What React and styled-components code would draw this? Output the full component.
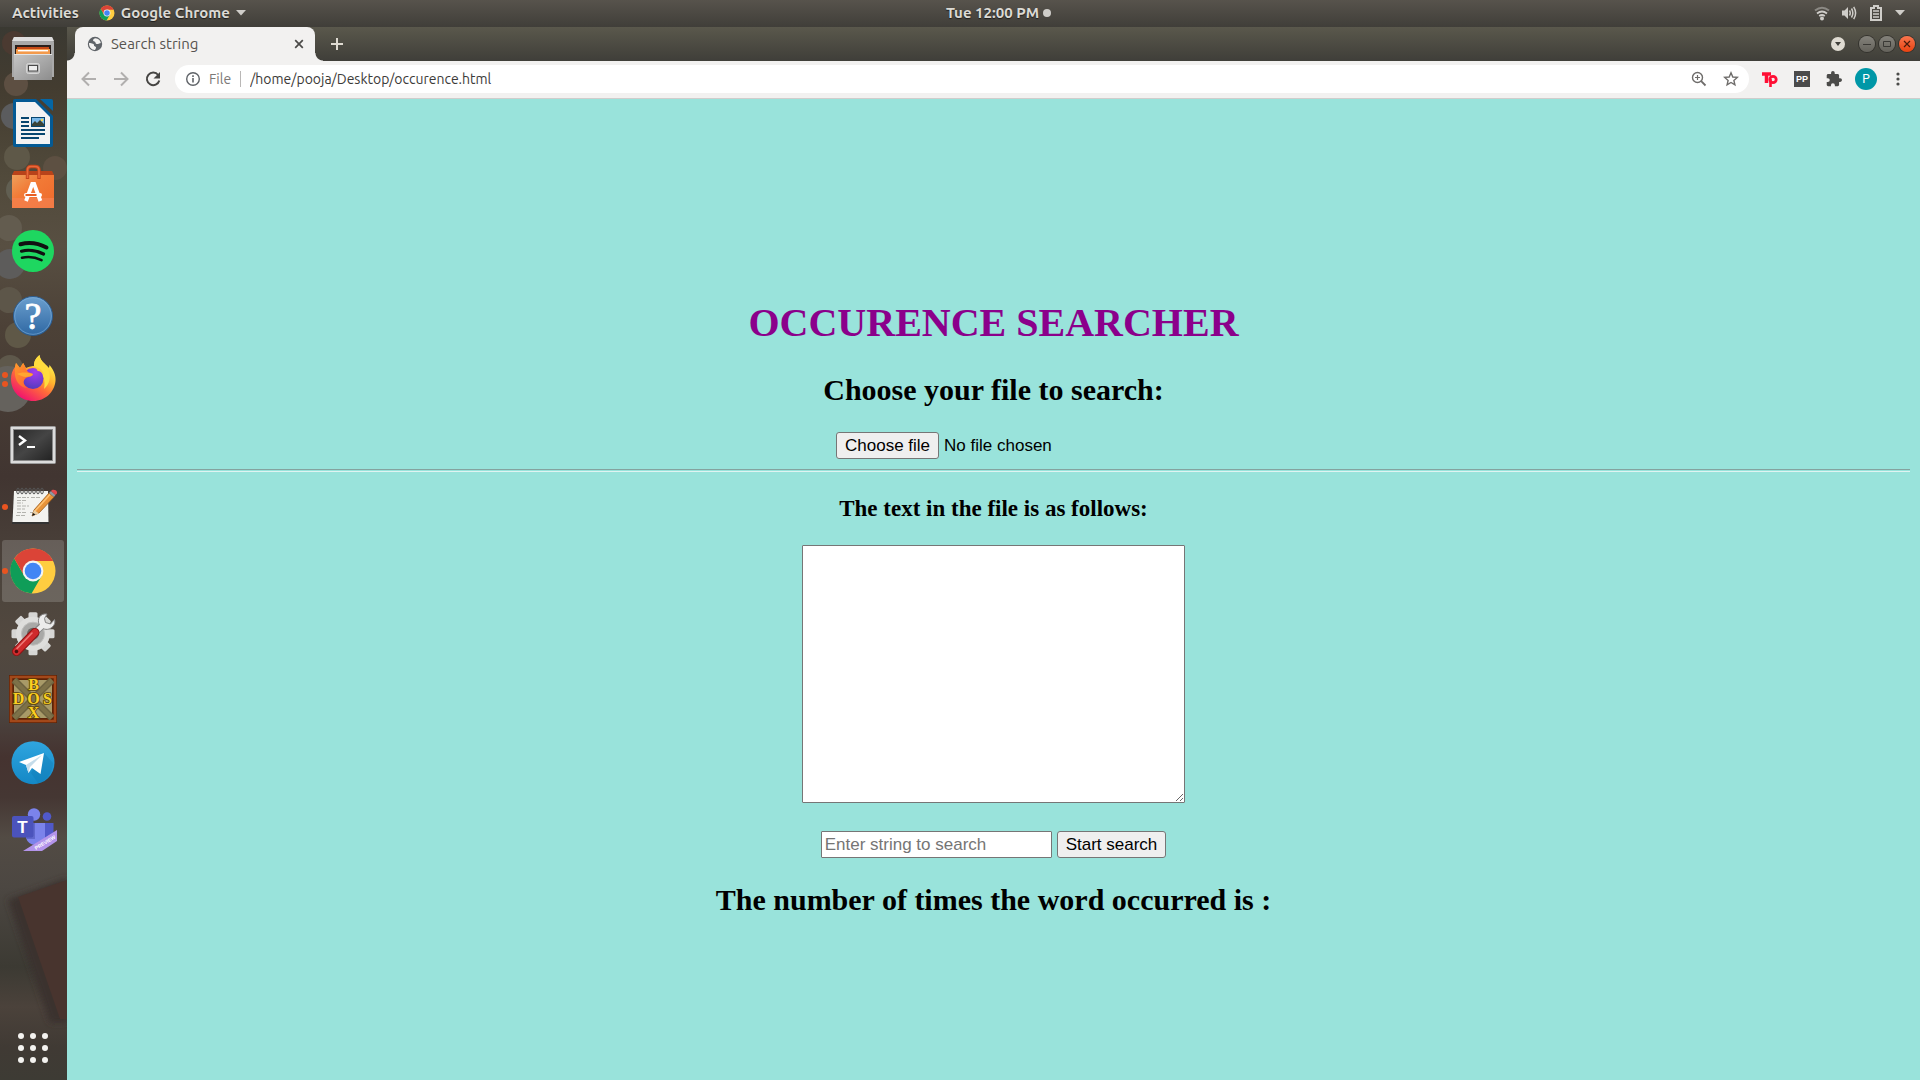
import React, { useRef, useState } from "react";
import styled, { createGlobalStyle } from "styled-components";

const Global = createGlobalStyle`
  * { box-sizing: border-box; }
  body { margin: 0; }
  button, input, textarea { font: inherit; margin: 0; }
`;

const uiFont = `Ubuntu, "Noto Sans", "Open Sans", sans-serif`;
const controlFont = `"Liberation Sans", Arial, sans-serif`;

/* ---------- desktop ---------- */

const Desktop = styled.div`
  display: flex;
  flex-direction: column;
  min-height: 100vh;
  font-family: ${uiFont};
`;

const Panel = styled.header`
  display: grid;
  grid-template-columns: 1fr auto 1fr;
  align-items: center;
  height: 27px;
  padding: 0 15px 1px 12px;
  background: linear-gradient(#57534c, #403e39);
  color: #dcdad5;
  font-size: 15px;
  font-weight: 600;
  line-height: 20px;
  text-shadow: 0 1px 1px rgba(0, 0, 0, 0.6);
`;

const PanelGroup = styled.div`
  display: flex;
  align-items: center;
  gap: ${(p) => p.$gap}px;
  justify-content: ${(p) => (p.$end ? "flex-end" : "flex-start")};
`;

const PanelButton = styled.button`
  display: flex;
  align-items: center;
  gap: 6px;
  padding: 0;
  border: 0;
  background: none;
  color: inherit;
  text-shadow: inherit;
  white-space: nowrap;
`;

const Clock = styled(PanelButton)`
  gap: 4px;
  padding-left: 80px;
`;

const Dot = styled.span`
  width: 8px;
  height: 8px;
  border-radius: 50%;
  background: #cfcdc9;
`;

const Workspace = styled.div`
  display: flex;
  flex: 1;
`;

/* ---------- dock ---------- */

const Dock = styled.nav`
  position: relative;
  isolation: isolate;
  display: flex;
  flex-direction: column;
  gap: 2px;
  width: 67px;
  flex: none;
  padding: 1px 3px 1px 2px;
  background: linear-gradient(#3a3932, #433c30 60px, #514a3b 150px, #584f42 220px, #4c4137 300px, #413531 450px, #4d453d 560px, #52483f 620px, #4c4641 680px, #453330 730px, #453733 770px, #524b44 810px, #4c4742 860px, #3c3a33 940px, #4b423b 980px, #403a34 1020px, #3d3b34);
`;

const Wallpaper = styled.svg`
  position: absolute;
  top: 0;
  left: 0;
  z-index: -1;
`;

const DockButton = styled.button`
  position: relative;
  display: grid;
  place-items: center;
  height: 62px;
  padding: 0;
  border: 0;
  border-radius: 3px;
  background: ${(p) => (p.$active ? "rgba(255, 255, 255, 0.17)" : "none")};
  ${(p) => p.$last && "margin-top: auto;"}
`;

const Running = styled.span`
  position: absolute;
  left: 0;
  top: 0;
  bottom: 0;
  display: flex;
  flex-direction: column;
  justify-content: center;
  gap: 3px;

  i {
    width: 6px;
    height: 6px;
    border-radius: 50%;
    background: #e95420;
  }
`;

/* ---------- browser chrome ---------- */

const Browser = styled.section`
  display: flex;
  flex-direction: column;
  flex: 1;
  min-width: 0;
`;

const TabStrip = styled.div`
  display: flex;
  align-items: center;
  height: 34px;
  padding: 0 5px 0 8px;
  background: linear-gradient(#5a584c, #3f3e39);
`;

const Tab = styled.div`
  position: relative;
  display: flex;
  align-items: center;
  gap: 8px;
  align-self: stretch;
  width: 240px;
  padding: 0 10px 0 12px;
  border-radius: 8px 8px 0 0;
  background: #f2f1f0;
  color: #56534f;
  font-size: 15px;
  line-height: 20px;

  &::before,
  &::after {
    content: "";
    position: absolute;
    bottom: 0;
    width: 8px;
    height: 8px;
  }
  &::before {
    left: -8px;
    background: radial-gradient(circle at 0 0, transparent 7px, #f2f1f0 8px);
  }
  &::after {
    right: -8px;
    background: radial-gradient(circle at 100% 0, transparent 7px, #f2f1f0 8px);
  }
`;

const TabTitle = styled.span`
  flex: 1;
`;

const IconButton = styled.button`
  display: grid;
  place-items: center;
  width: ${(p) => p.$w}px;
  height: ${(p) => p.$h || p.$w}px;
  flex: none;
  padding: 0;
  border: 0;
  background: none;
`;

const NewTab = styled(IconButton)`
  margin-left: 12px;
`;

const WindowButtons = styled.div`
  display: flex;
  align-items: center;
  gap: 4px;
  margin-left: auto;
`;

const TabSearch = styled(IconButton)`
  margin-right: 9px;
`;

const WindowButton = styled.button`
  display: grid;
  place-items: center;
  width: 16px;
  height: 16px;
  padding: 0;
  border: 0;
  border-radius: 50%;
  background: ${(p) => (p.$close ? "linear-gradient(#f9764e, #ea4210)" : "linear-gradient(#84827b, #64625b)")};
  box-shadow: 0 0 0 1px #34332e;
`;

const Toolbar = styled.div`
  display: flex;
  align-items: center;
  height: 38px;
  padding: 3px 6px 4px;
  background: #f2f1f0;
  border-bottom: 1px solid #cfcdcc;
`;

const AddressBar = styled.label`
  display: flex;
  align-items: center;
  flex: 1;
  height: 28px;
  margin: 0 5px 0 6px;
  padding: 0 2px 0 11px;
  border-radius: 14px;
  background: #fff;
  font-size: 14px;
  color: #7c7977;
`;

const Scheme = styled.span`
  padding: 0 9px;
`;

const Separator = styled.span`
  width: 1px;
  height: 16px;
  background: #b9b7b6;
`;

const Address = styled.input`
  flex: 1;
  min-width: 0;
  padding: 0 9px;
  border: 0;
  outline: 0;
  background: none;
  color: #3c3a38;
`;

const Avatar = styled.span`
  display: grid;
  place-items: center;
  width: 22px;
  height: 22px;
  border-radius: 50%;
  background: #0097a7;
  color: #fff;
  font-family: Roboto, sans-serif;
  font-size: 12px;
`;

/* ---------- web page ---------- */

const Page = styled.main`
  display: flex;
  flex-direction: column;
  align-items: center;
  flex: 1;
  padding: 201px 10px 40px;
  background: #99e3db;
  color: #000;
  font-family: "Liberation Serif", "Times New Roman", serif;
`;

const Title = styled.h1`
  margin: 0 0 28px;
  color: #8b008b;
  font-size: 40px;
  line-height: 45px;
`;

const Heading = styled.h2`
  margin: 0 0 25px;
  font-size: 30px;
  line-height: 34px;
`;

const SubHeading = styled.h3`
  margin: 0 0 23px;
  font-size: 23px;
  line-height: 26px;
`;

const FileField = styled.div`
  display: flex;
  align-items: center;
  gap: 5px;
  width: 315px;
  font: 17px ${controlFont};
`;

const HiddenFile = styled.input`
  display: none;
`;

const FormButton = styled.button`
  height: 27px;
  padding: 0 8px;
  border: 1px solid #767676;
  border-radius: 3px;
  background: #efefef;
  color: #000;
  font: 17px ${controlFont};
`;

const Rule = styled.hr`
  align-self: stretch;
  height: 3px;
  margin: 10px 0 24px;
  border: 0;
  border-top: 1px solid #84a39f;
  border-bottom: 1px solid #dff3f1;
`;

const FileText = styled.textarea`
  width: 383px;
  height: 258px;
  margin-bottom: 28px;
  border: 1px solid #767676;
  border-radius: 1px;
  background: #fff;
`;

const SearchForm = styled.form`
  display: flex;
  gap: 5px;
  margin: 0 0 25px;
`;

const SearchInput = styled.input`
  width: 231px;
  height: 27px;
  padding: 0 3px;
  border: 1px solid #767676;
  border-radius: 1px;
  background: #fff;
  font: 17px ${controlFont};

  &::placeholder {
    color: #757575;
    opacity: 1;
  }
`;

/* ---------- icons ---------- */

const Icon = ({ size = 48, w, h, box, children }) => (
  <svg width={w || size} height={h || size} viewBox={box || `0 0 ${w || size} ${h || size}`} fill="none" aria-hidden="true">
    {children}
  </svg>
);

const ChromeMark = ({ size = 48 }) => (
  <Icon size={size} box="0 0 48 48">
    <circle cx="24" cy="24" r="22.5" fill="#ffcd40" />
    <path d="M5.24 11.51A22.5 22.5 0 0 0 22.56 46.5L32.66 29L15.34 29Z" fill="#0f9d58" />
    <path d="M5.24 11.51A22.5 22.5 0 0 1 44.2 14L24 14L15.34 29Z" fill="#db4437" />
    <circle cx="24" cy="24" r="10.4" fill="#f4f4f4" />
    <circle cx="24" cy="24" r="8.3" fill="#4285f4" />
  </Icon>
);

const FilesIcon = () => (
  <Icon>
    <defs>
      <linearGradient id="cab" x1="0" y1="0" x2="1" y2="1"><stop stopColor="#c6c6c6" /><stop offset="1" stopColor="#8d8d8d" /></linearGradient>
    </defs>
    <path d="M5 2H43L45 7V42H3V7Z" fill="#a9a9a9" />
    <path d="M5 2H43L45 6H3Z" fill="#dedede" />
    <rect x="6" y="10" width="36" height="10" fill="#2b201b" />
    <rect x="8" y="12" width="32" height="8" fill="#c64a16" />
    <rect x="7" y="14" width="34" height="6" fill="#f39a4c" />
    <rect x="9" y="15" width="30" height="1.4" fill="#fff" />
    <path d="M5 19H43V45H5Z" fill="url(#cab)" />
    <path d="M5 19.5H43" stroke="#e4e4e4" />
    <rect x="17.5" y="28.5" width="13" height="10" rx="2" fill="#b9b9b9" stroke="#d6d6d6" />
    <rect x="19.5" y="30.500" width="9" height="5.500" fill="#ededed" stroke="#4a4a4a" />
  </Icon>
);

const WriterIcon = () => (
  <Icon>
    <path d="M6 0H27L44 17V46A2 2 0 0 1 42 48H6A2 2 0 0 1 4 46V2A2 2 0 0 1 6 0Z" fill="#045a94" />
    <path d="M31 0H42Q44 0 44 2V12Z" fill="#0566a5" />
    <path d="M7 3H26L41 18V45H7Z" fill="#f3f3f3" />
    <path d="M12 19H20M12 23H20M12 27H20M12 31H36M12 35H36M12 39H30" stroke="#07466f" strokeWidth="2" />
    <rect x="22.500" y="18.500" width="13" height="9" fill="#79b8e8" stroke="#07466f" />
    <path d="M23 27V25L26 22L28 24L31 21L35 25V27Z" fill="#3a4438" />
    <circle cx="33" cy="21" r="1.200" fill="#f8d848" />
  </Icon>
);

const SoftwareIcon = () => (
  <Icon>
    <defs>
      <linearGradient id="bag" x1="0" y1="0" x2="1" y2="1"><stop stopColor="#eda05c" /><stop offset=".4" stopColor="#f27a36" /><stop offset="1" stopColor="#ee6a2c" /></linearGradient>
    </defs>
    <path d="M5 8H43L45 12H3Z" fill="#b8431a" />
    <rect x="3" y="12" width="42" height="33" fill="url(#bag)" />
    <rect x="3" y="35" width="42" height="10" fill="#f58250" opacity=".7" />
    <path d="M18.500 16V7Q18.500 3.500 22 3.500H26Q30 3.500 30 7V16" stroke="#c2451c" strokeWidth="3.400" />
    <path d="M18.500 15V7Q18.500 3.500 22 3.500H26Q30 3.500 30 7V15" stroke="#e8683a" strokeWidth="1.600" />
    <path d="M17 38L23.200 21H25.200L31.400 38" stroke="#fff" strokeWidth="3.800" />
    <rect x="15" y="30" width="18" height="4" rx="2" fill="#fff" />
    <rect x="16.500" y="31" width="11" height="2" fill="#e85f24" />
  </Icon>
);

const SpotifyIcon = () => (
  <Icon>
    <circle cx="24" cy="24" r="21" fill="#1ed760" />
    <path d="M11.500 17.200C20 15 30 16.500 37.500 20.500" stroke="#111" strokeWidth="4" strokeLinecap="round" />
    <path d="M12.500 24.200C19 22.500 28 23.500 34.500 27" stroke="#111" strokeWidth="3.200" strokeLinecap="round" />
    <path d="M13 30.800C19 29.300 26 30 32.500 33.200" stroke="#111" strokeWidth="2.600" strokeLinecap="round" />
  </Icon>
);

const HelpIcon = () => (
  <Icon>
    <defs>
      <linearGradient id="help" x1="0" y1="0" x2="0" y2="1"><stop stopColor="#6b9fce" /><stop offset="1" stopColor="#2f68a3" /></linearGradient>
    </defs>
    <circle cx="24" cy="25" r="19.500" fill="url(#help)" stroke="#2b5c90" />
    <circle cx="24" cy="25" r="18.300" stroke="#7fb0dc" opacity=".6" />
    <text x="24" y="38" fill="#fff" stroke="#fff" strokeWidth=".8" fontSize="38" fontFamily="Liberation Serif, serif" textAnchor="middle">?</text>
  </Icon>
);

const FirefoxIcon = () => (
  <Icon>
    <defs>
      <linearGradient id="fox" x1=".8" y1=".1" x2=".25" y2=".95"><stop stopColor="#fff44f" /><stop offset=".35" stopColor="#ffb52e" /><stop offset=".6" stopColor="#ff6a3a" /><stop offset="1" stopColor="#f0136f" /></linearGradient>
      <radialGradient id="globe" cx=".6" cy=".2" r=".9"><stop stopColor="#a63cf0" /><stop offset="1" stopColor="#4a3bb8" /></radialGradient>
      <linearGradient id="foxhead" x1="0" y1="0" x2="1" y2="1"><stop stopColor="#ff9a2a" /><stop offset="1" stopColor="#ff5a36" /></linearGradient>
    </defs>
    <path d="M6 12L7 8L11 13L14 8L17 13C22 11 25 11 25 11C25 6 27 3 30.500 0C31 6 36 8 40 13L40.500 10C45 15 47 21 46.500 26C45.500 37 36 46 24.500 46C12 46 2 37 2 24C2 19 3.500 15 6 12Z" fill="url(#fox)" />
    <path d="M25 11C25 6 27 3 30.500 0C31 6 36 8 39 14C43 22 40 30 35 34C37 25 34 17 25 11Z" fill="#ffdc3e" />
    <circle cx="24" cy="23.500" r="10.500" fill="url(#globe)" />
    <path d="M25 12C31 12 34 16 35 20C33 17 31 16 28.500 16C28 14 27 13 25 12Z" fill="#ffc83a" />
    <path d="M6 12L7 8L11 13L14.500 8L17 14L19 17L24 19C23 22 19 21.500 17 23C13.500 25.500 14 30 18 33C13 33 7 28 6 20Z" fill="url(#foxhead)" />
    <path d="M8 19C12 17 18 17 24 19C23 22 19 21.500 17 22C14 22 11 20 8 19Z" fill="#ffa630" />
  </Icon>
);

const TerminalIcon = () => (
  <Icon>
    <defs>
      <linearGradient id="term" x1="0" y1="0" x2="1" y2="1"><stop stopColor="#2a2a2a" /><stop offset=".5" stopColor="#454545" /><stop offset="1" stopColor="#222" /></linearGradient>
    </defs>
    <rect x="1.500" y="7.500" width="45" height="37" rx="1" fill="#dcdcdc" stroke="#9b9b9b" />
    <rect x="4.500" y="10.500" width="39" height="31" fill="url(#term)" stroke="#888" />
    <path d="M10 17L16 21.500L10 26" stroke="#fff" strokeWidth="2.400" />
    <path d="M18 28H26" stroke="#fff" strokeWidth="2" />
  </Icon>
);

const EditorIcon = () => (
  <Icon>
    <path d="M5 8H39L40 41H3Z" fill="#333" />
    <path d="M5 8H39L39.500 39H3.500Z" fill="#f3f3f0" />
    <path d="M8 14.500H20M22 14.500H32M8 17.500H18M8 20H14M8 23H20M8 26H16M8 29.500H18M7 32.500H17M21 29.500H24" stroke="#b3b3ae" strokeWidth="1.200" strokeDasharray="4 1" />
    {[9, 13, 17, 21, 25, 29, 33].map((x) => (
      <ellipse key={x} cx={x} cy="8" rx="1.300" ry="3" stroke="#555" />
    ))}
    <path d="M23 33L25 27L40 10L45 14L30 30Z" fill="#e8943a" stroke="#9a5a1a" strokeWidth=".8" />
    <path d="M26 28L41 11.500" stroke="#ffc272" strokeWidth="1.500" />
    <path d="M23 33L25 27L30 30.500Z" fill="#e9cfa6" />
    <path d="M23 33L24 30L26.500 31.500Z" fill="#111" />
    <path d="M40 10L42 8L46.500 12L45 14Z" fill="#8f99a3" />
    <path d="M42 8C44 5 50 8 47.500 11L46.500 12Z" fill="#e5484d" />
  </Icon>
);

const TweaksIcon = () => (
  <Icon>
    {[0, 45, 90, 135].map((angle) => (
      <rect key={angle} x="19.500" y="1.200" width="9" height="43" rx="1.500" fill="#d6d6d4" transform={`rotate(${angle} 24 22.700)`} />
    ))}
    <circle cx="24" cy="22.700" r="17" fill="#dededc" />
    <circle cx="24" cy="22.700" r="11.500" fill="#a9a9a7" stroke="#bfbfbd" />
    <circle cx="24" cy="22.700" r="6" fill="#6a6764" />
    <path d="M21 26L35 13" stroke="#858585" strokeWidth="7" />
    <path d="M38 3C31 2 28 8 30 13C32 18 38 20 42 17C45 15 46.500 12 45.500 8.500L41.500 13L36.500 11.500L35.500 7.500Z" fill="#ececec" stroke="#858585" />
    <path d="M21 26L36 12.500" stroke="#ececec" strokeWidth="5" />
    <path d="M7.500 40.500L26 21.500" stroke="#8e1414" strokeWidth="9" strokeLinecap="round" />
    <path d="M7.500 40.500L26 21.500" stroke="#cf2a2c" strokeWidth="7" strokeLinecap="round" />
    <path d="M8 37.500L23 22" stroke="#ee7a78" strokeWidth="1.600" strokeLinecap="round" />
    <circle cx="7.500" cy="40.500" r="1.800" fill="#4a1010" />
  </Icon>
);

const DosBoxIcon = () => (
  <Icon>
    <rect width="48" height="48" fill="#5c2206" />
    <rect x="2" y="2" width="44" height="44" stroke="#a3481a" strokeWidth="2.600" />
    <rect x="5" y="5" width="38" height="38" fill="#a89a68" />
    <path d="M5 5L43 43M43 5L5 43" stroke="#6d6340" strokeWidth="7" />
    <path d="M5 5L43 43M43 5L5 43" stroke="#7d7148" strokeWidth="4" />
    <g fill="#fbd022" stroke="#5a4208" strokeWidth="1.600" strokeLinejoin="round" paintOrder="stroke" fontFamily="Liberation Serif, serif" fontWeight="700" fontSize="16" textAnchor="middle">
      <text x="24.500" y="15">B</text>
      <text x="9.500" y="28.800">D</text>
      <text x="24.500" y="28.800">O</text>
      <text x="38.500" y="28.800">S</text>
      <text x="24.500" y="43">X</text>
    </g>
  </Icon>
);

const TelegramIcon = () => (
  <Icon>
    <defs>
      <linearGradient id="tg" x1="0" y1="0" x2="0" y2="1"><stop stopColor="#2fa5df" /><stop offset="1" stopColor="#1488c6" /></linearGradient>
    </defs>
    <circle cx="24" cy="23.700" r="21.500" fill="url(#tg)" />
    <path d="M35 14L44 24C44 32 38 42 29 44L22 34Z" fill="#0d78b3" opacity=".35" />
    <path d="M10 23L35 14L31.500 35L23 29L19.500 34L17 26Z" fill="#fff" />
    <path d="M17 26L33 16L21 28L19.500 34Z" fill="#c5dcea" />
  </Icon>
);

const TeamsIcon = () => (
  <Icon>
    <circle cx="38" cy="13.500" r="4.300" fill="#5059c9" />
    <path d="M33 20H44.500V33A8 8 0 0 1 33 38Z" fill="#5059c9" />
    <circle cx="25" cy="11.500" r="6.200" fill="#7b83eb" />
    <path d="M17 20H36V35A10 10 0 0 1 17 35Z" fill="#7b83eb" />
    <path d="M17 20H26V36H17.200Z" fill="#5a61c4" opacity=".8" />
    <rect x="3" y="13" width="21.500" height="21.500" rx="2" fill="#4b53bc" />
    <text x="13.500" y="30" fill="#fff" fontSize="17" fontWeight="700" fontFamily="Liberation Sans, sans-serif" textAnchor="middle">T</text>
    <path d="M14 48L48 27V38L33 48Z" fill="#b394ea" />
    <text x="0" y="0" fill="#fff" fontSize="5" fontWeight="700" fontFamily="Liberation Sans, sans-serif" textAnchor="middle" transform="translate(37 41) rotate(-31)">PREVIEW</text>
  </Icon>
);

const AppsIcon = () => (
  <Icon>
    {[12, 24, 36].map((y) => [12, 24, 36].map((x) => <circle key={`${x}-${y}`} cx={x} cy={y} r="3" fill="#f4f3f0" />))}
  </Icon>
);

const bokeh = [
  [14, 16, 12, "#4b3a31"],
  [16, 57, 12, "#5d4f42"],
  [14, 89, 13, "#5b5c5e"],
  [17, 130, 13, "#5e5848"],
  [55, 141, 12, "#5d5042"],
  [19, 163, 13, "#615f52"],
  [9, 201, 13, "#635c4f"],
  [10, 237, 15, "#5d5c5b"],
  [9, 273, 13, "#5d5649"],
  [18, 308, 13, "#5f5847"],
  [10, 341, 13, "#5e584b"],
  [8, 362, 23, "#65625d"],
];

const DockWallpaper = () => (
  <Wallpaper width="67" height="1053" viewBox="0 0 67 1053" aria-hidden="true">
    <defs>
      <filter id="soft" x="-20%" y="-20%" width="140%" height="140%"><feGaussianBlur stdDeviation="3" /></filter>
    </defs>
    {bokeh.map(([x, y, r, color]) => <circle key={y} cx={x} cy={y} r={r} fill={color} />)}
    <path d="M8 873L67 851V996H50Z" fill="#3b302d" filter="url(#soft)" />
    <path d="M18 870L67 853V992H60Z" fill="#48342e" />
  </Wallpaper>
);

const dockApps = [
  { name: "Files", icon: FilesIcon },
  { name: "LibreOffice Writer", icon: WriterIcon },
  { name: "Software", icon: SoftwareIcon },
  { name: "Spotify", icon: SpotifyIcon },
  { name: "Help", icon: HelpIcon },
  { name: "Firefox", icon: FirefoxIcon, windows: 2 },
  { name: "Terminal", icon: TerminalIcon },
  { name: "Text Editor", icon: EditorIcon, windows: 1 },
  { name: "Google Chrome", icon: ChromeMark, windows: 1, active: true },
  { name: "Tweaks", icon: TweaksIcon },
  { name: "DOSBox", icon: DosBoxIcon },
  { name: "Telegram", icon: TelegramIcon },
  { name: "Teams", icon: TeamsIcon },
];

const Caret = () => (
  <Icon w={10} h={6}><path d="M0 0H10L5 5.500Z" fill="#cfcdc9" /></Icon>
);

/* ---------- sections ---------- */

function TopPanel() {
  return (
    <Panel>
      <PanelGroup $gap={20}>
        <PanelButton>Activities</PanelButton>
        <PanelButton>
          <ChromeMark size={16} />
          Google Chrome
          <Caret />
        </PanelButton>
      </PanelGroup>
      <Clock>
        Tue 12:00 PM
        <Dot />
      </Clock>
      <PanelGroup $gap={11} $end>
        <Icon w={16} h={16}>
          <path d="M1 5.500Q8 0 15 5.500" stroke="#8b8984" strokeWidth="2" />
          <path d="M3 8.500Q8 4.500 13 8.500M5.200 11Q8 9 10.800 11" stroke="#cfcdc9" strokeWidth="1.800" />
          <circle cx="8" cy="13.500" r="2" fill="#cfcdc9" />
        </Icon>
        <Icon w={16} h={16}>
          <path d="M1 5.500H3.500L7 2V14L3.500 10.500H1Z" fill="#cfcdc9" />
          <path d="M8.500 5.500Q10 8 8.500 10.500M10.500 3.500Q13.200 8 10.500 12.500M12.700 1.800Q16.500 8 12.700 14.200" stroke="#cfcdc9" strokeWidth="1.500" />
        </Icon>
        <Icon w={16} h={16}>
          <path d="M3 3H6V1H10V3H13V15H3Z" stroke="#cfcdc9" strokeWidth="2" />
          <path d="M5 6H11M5 9H11M5 12H11" stroke="#cfcdc9" strokeWidth="1.500" />
        </Icon>
        <Caret />
      </PanelGroup>
    </Panel>
  );
}

function Tabs() {
  return (
    <TabStrip>
      <Tab>
        <Icon size={16}>
          <circle cx="8" cy="8" r="7.200" fill="#5f6368" />
          <path d="M8.500 2.200C5.500 3 5.500 5 7.500 5.500C9 6 8 7.500 9.500 8C11 8.300 13 7 13.800 7C13.500 4.500 11.500 2.500 8.500 2.200ZM2 7C5 7 7.500 8 7 9.500C6.800 10.500 9.500 10.500 9 12L8 14C4.500 13.800 1.800 11 2 7Z" fill="#f2f1f0" />
        </Icon>
        <TabTitle>Search string</TabTitle>
        <IconButton $w={12} aria-label="Close tab">
          <Icon size={12}><path d="M2.200 2.200L9.800 9.800M9.800 2.200L2.200 9.800" stroke="#4b4a48" strokeWidth="1.700" /></Icon>
        </IconButton>
      </Tab>
      <NewTab $w={20} aria-label="New tab">
        <Icon size={12}><path d="M6 0V12M0 6H12" stroke="#dfdbd2" strokeWidth="2" /></Icon>
      </NewTab>
      <WindowButtons>
        <TabSearch $w={16} aria-label="Search tabs">
          <Icon size={16}>
            <circle cx="8" cy="8" r="7" fill="#dfdbd2" />
            <path d="M5 6H11L8 10Z" fill="#3f3e39" />
          </Icon>
        </TabSearch>
        <WindowButton aria-label="Minimize">
          <Icon size={10}><path d="M1 5.500H9" stroke="#3a3935" /></Icon>
        </WindowButton>
        <WindowButton aria-label="Restore">
          <Icon size={10}><path d="M1.500 2.500H8.500V7.500H1.500Z" stroke="#3a3935" /></Icon>
        </WindowButton>
        <WindowButton $close aria-label="Close window">
          <Icon size={10}><path d="M2 2L8 8M8 2L2 8" stroke="#4a1b0b" strokeWidth="1.200" /></Icon>
        </WindowButton>
      </WindowButtons>
    </TabStrip>
  );
}

function Navigation() {
  const [url, setUrl] = useState("/home/pooja/Desktop/occurence.html");
  return (
    <Toolbar>
      <IconButton $w={32} $h={28} aria-label="Back">
        <Icon size={16}><path d="M15 8H2M8 1.500L1.500 8L8 14.500" stroke="#b1afae" strokeWidth="2" /></Icon>
      </IconButton>
      <IconButton $w={32} $h={28} aria-label="Forward">
        <Icon size={16}><path d="M1 8H14M8 1.500L14.500 8L8 14.500" stroke="#b1afae" strokeWidth="2" /></Icon>
      </IconButton>
      <IconButton $w={32} $h={28} aria-label="Reload">
        <Icon size={16}>
          <path d="M13.200 4A6.300 6.300 0 1 0 14.300 9.500" stroke="#464543" strokeWidth="2" />
          <path d="M15 1V7.500H8.500Z" fill="#464543" />
        </Icon>
      </IconButton>
      <AddressBar>
        <Icon size={14}>
          <circle cx="7" cy="7" r="6.300" stroke="#5f6368" strokeWidth="1.400" />
          <path d="M7 6V10.500M7 3.300V5" stroke="#5f6368" strokeWidth="1.600" />
        </Icon>
        <Scheme>File</Scheme>
        <Separator />
        <Address aria-label="Address" value={url} onChange={(e) => setUrl(e.target.value)} />
        <IconButton $w={32} $h={28} aria-label="Zoom">
          <Icon size={16}>
            <circle cx="6.500" cy="6.500" r="5" stroke="#6e6c6a" strokeWidth="1.400" />
            <path d="M10.200 10.200L14.500 14.500" stroke="#6e6c6a" strokeWidth="1.800" />
            <path d="M4 6.500H9M6.500 4V9" stroke="#6e6c6a" strokeWidth="1.200" />
          </Icon>
        </IconButton>
        <IconButton $w={32} $h={28} aria-label="Bookmark">
          <Icon size={16}><path d="M8 1.800L9.800 6L14.300 6.400L10.900 9.400L11.900 13.800L8 11.500L4.100 13.800L5.100 9.400L1.700 6.400L6.200 6Z" stroke="#6e6c6a" strokeWidth="1.400" /></Icon>
        </IconButton>
      </AddressBar>
      <IconButton $w={32} $h={28} aria-label="Tp extension">
        <Icon size={16}>
          <path d="M0 3H9M4.500 3V12" stroke="#ff0f35" strokeWidth="3.500" />
          <circle cx="11" cy="8.500" r="3.200" stroke="#ff0f35" strokeWidth="2.800" />
          <path d="M8.500 8V16" stroke="#ff0f35" strokeWidth="2.600" />
        </Icon>
      </IconButton>
      <IconButton $w={32} $h={28} aria-label="PP extension">
        <Icon size={16}>
          <rect width="16" height="16" fill="#4b4b4b" />
          <text x="8" y="11" textAnchor="middle" fontFamily="Liberation Sans, sans-serif" fontSize="9" fontWeight="700" fill="#fff">PP</text>
        </Icon>
      </IconButton>
      <IconButton $w={32} $h={28} aria-label="Extensions">
        <Icon size={16} box="1 1 22 22"><path fill="#4b4b49" d="M20.500 11H19V7c0-1.100-.9-2-2-2h-4V3.500a2.500 2.500 0 0 0-5 0V5H4c-1.100 0-2 .9-2 2v3.800h1.500a2.700 2.700 0 0 1 0 5.400H2V20c0 1.100.9 2 2 2h3.800v-1.500a2.700 2.700 0 0 1 5.400 0V22H17c1.100 0 2-.9 2-2v-4h1.500a2.500 2.500 0 0 0 0-5z" /></Icon>
      </IconButton>
      <IconButton $w={32} $h={28} aria-label="Profile">
        <Avatar>P</Avatar>
      </IconButton>
      <IconButton $w={32} $h={28} aria-label="Menu">
        <Icon size={16}>{[3, 8, 13].map((y) => <circle key={y} cx="8" cy={y} r="1.600" fill="#4b4b49" />)}</Icon>
      </IconButton>
    </Toolbar>
  );
}

function SearcherPage() {
  const picker = useRef(null);
  const [fileName, setFileName] = useState("No file chosen");
  const [text, setText] = useState("");
  const [query, setQuery] = useState("");
  const [count, setCount] = useState("");

  const loadFile = async (e) => {
    const file = e.target.files[0];
    if (!file) return;
    setFileName(file.name);
    setText(await file.text());
  };

  const search = (e) => {
    e.preventDefault();
    setCount(query ? text.split(query).length - 1 : "");
  };

  return (
    <Page>
      <Title>OCCURENCE SEARCHER</Title>
      <Heading>Choose your file to search:</Heading>
      <FileField>
        <HiddenFile ref={picker} type="file" aria-label="File to search" onChange={loadFile} />
        <FormButton type="button" onClick={() => picker.current.click()}>Choose file</FormButton>
        <span>{fileName}</span>
      </FileField>
      <Rule />
      <SubHeading id="file-text">The text in the file is as follows:</SubHeading>
      <FileText aria-labelledby="file-text" value={text} onChange={(e) => setText(e.target.value)} />
      <SearchForm onSubmit={search}>
        <SearchInput aria-label="String to search" placeholder="Enter string to search" value={query} onChange={(e) => setQuery(e.target.value)} />
        <FormButton type="submit">Start search</FormButton>
      </SearchForm>
      <Heading>The number of times the word occurred is : {count}</Heading>
    </Page>
  );
}

export default function App() {
  return (
    <Desktop>
      <Global />
      <TopPanel />
      <Workspace>
        <Dock aria-label="Dock">
          <DockWallpaper />
          {dockApps.map(({ name, icon: AppIcon, windows, active }) => (
            <DockButton key={name} aria-label={name} $active={active}>
              {windows && <Running>{Array.from({ length: windows }, (_, i) => <i key={i} />)}</Running>}
              <AppIcon />
            </DockButton>
          ))}
          <DockButton aria-label="Show Applications" $last>
            <AppsIcon />
          </DockButton>
        </Dock>
        <Browser>
          <Tabs />
          <Navigation />
          <SearcherPage />
        </Browser>
      </Workspace>
    </Desktop>
  );
}
